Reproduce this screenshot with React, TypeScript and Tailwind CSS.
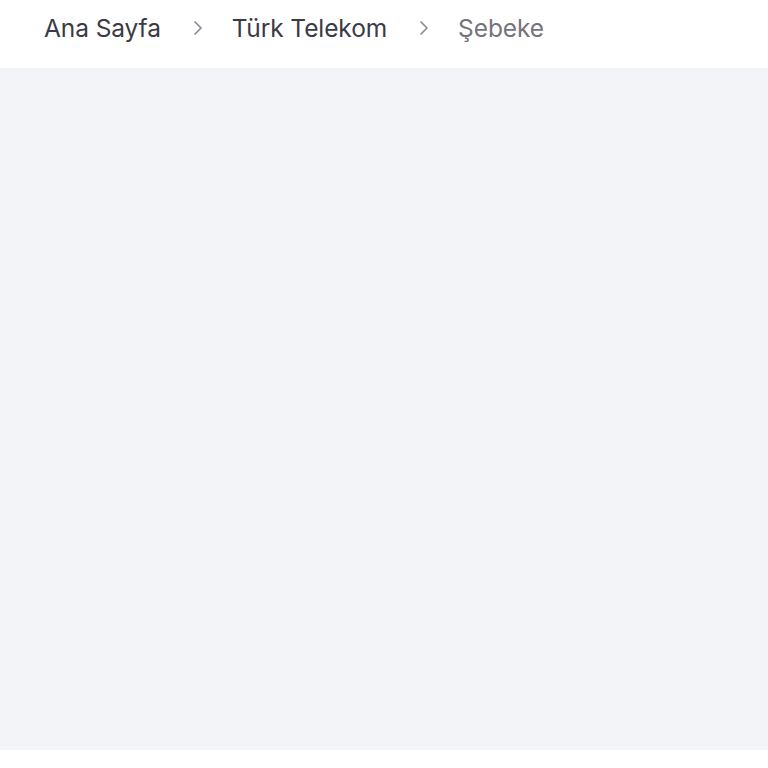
import { ChevronRight } from 'lucide-react';

const CRUMBS = ['Ana Sayfa', 'Türk Telekom', 'Şebeke'];

export default function App() {
  return (
    <div className="min-h-[768px] bg-white" style={{ fontFamily: 'Inter, "Noto Sans", sans-serif' }}>
      {/* Breadcrumb */}
      <nav className="h-[68px] flex items-center px-[44px] pb-[12px]">
        {CRUMBS.map((c, i) => (
          <div key={c} className="flex items-center">
            {i > 0 && (
              <ChevronRight className="ml-[25px] mr-[22px] w-[24px] h-[24px] text-[#8a8a94]" strokeWidth={1.75} />
            )}
            <span
              className={`text-[24.5px] tracking-[-0.1px] ${
                i === CRUMBS.length - 1 ? 'text-[#74747e]' : 'text-[#3b3b45]'
              }`}
            >
              {c}
            </span>
          </div>
        ))}
      </nav>

      {/* Content */}
      <main className="h-[682px] bg-[#f3f4f8]" />
    </div>
  );
}
